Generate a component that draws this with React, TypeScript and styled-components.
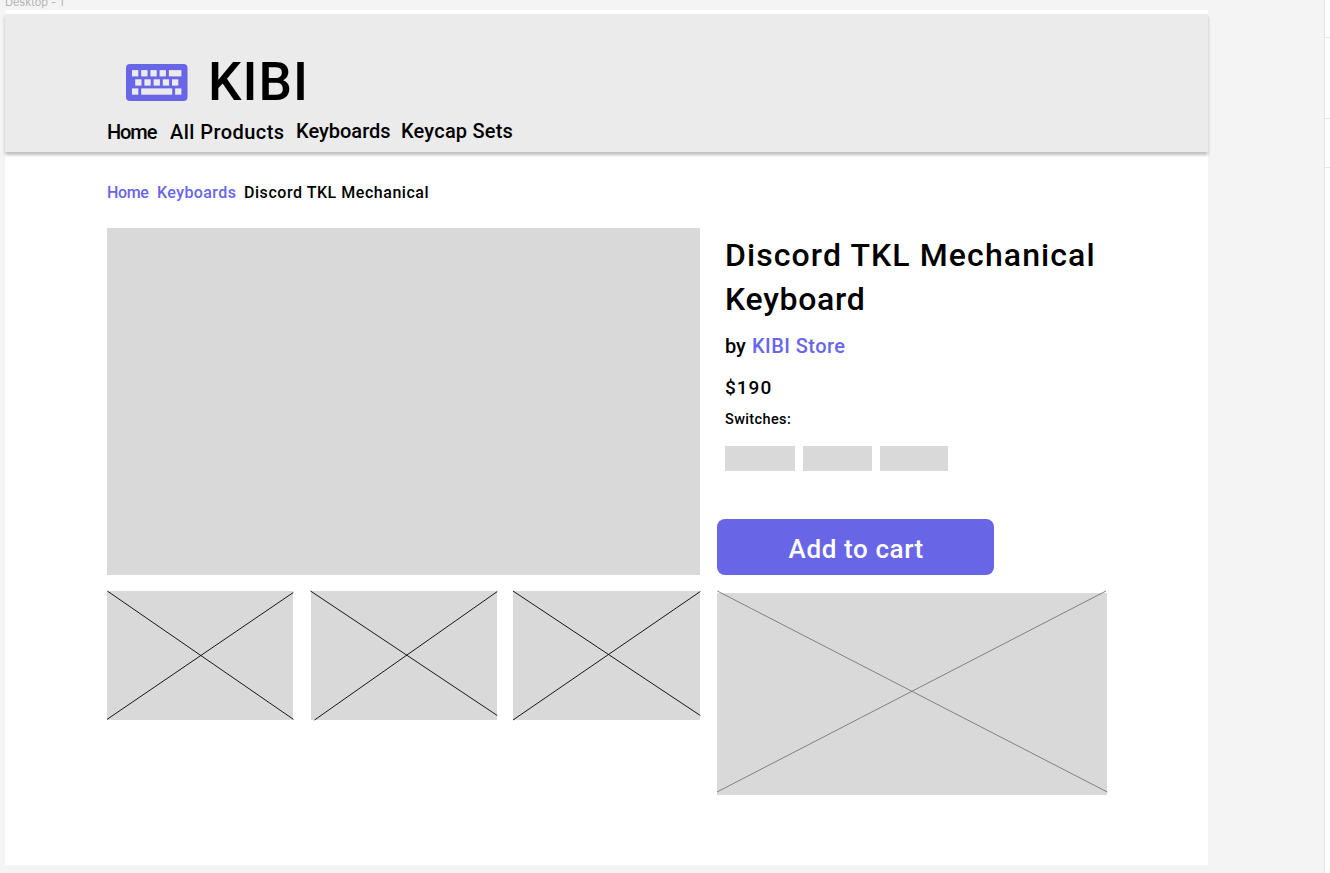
import React from "react";
import styled, { createGlobalStyle } from "styled-components";

const ACCENT = "#6866e7";
const FILL = "#d9d9d9";

const GlobalStyle = createGlobalStyle`
  * { box-sizing: border-box; }
  html, body { height: 100%; }
  body {
    margin: 0;
    overflow: hidden;
    background: #f4f4f4;
    color: #000;
    font-family: Roboto, "Liberation Sans", sans-serif;
    font-weight: 500;
  }
  h1, p { margin: 0; font-weight: 500; }
  a { color: inherit; text-decoration: none; }
`;

const Workspace = styled.div`
  display: flex;
  justify-content: space-between;
  height: 873px;
  overflow: hidden;
`;

const FrameColumn = styled.div`
  width: 1203.4px;
  margin-left: 5px;
`;

const FrameLabel = styled.div`
  display: flex;
  align-items: flex-start;
  height: 10px;
  font: 400 11px/12px Inter, sans-serif;
  color: #b5b5b5;
  white-space: nowrap;
`;

const FrameName = styled.span`
  margin-top: -4px;
`;

const Artboard = styled.main`
  height: 855.3px;
  padding-top: 4px;
  background: #fff;
`;

const Header = styled.header`
  height: 138.3px;
  padding: 38px 0 0 102px;
  background: #ebebeb;
  box-shadow: 0 3px 3px rgba(0, 0, 0, 0.25);
`;

const Brand = styled.div`
  display: flex;
  align-items: flex-start;
  height: 68px;
  padding-left: 19px;
`;

const BrandIcon = styled.svg`
  width: 61.5px;
  height: 37px;
  margin-top: 11.7px;
`;

const Text = styled.span<{ $size: number; $line: number; $spacing?: number }>`
  display: block;
  white-space: nowrap;
  font-size: ${(p) => p.$size}px;
  line-height: ${(p) => p.$line}px;
  letter-spacing: ${(p) => p.$spacing ?? 0}px;
`;

const BrandName = styled(Text)`
  margin-left: 20.5px;
`;

const Nav = styled.nav`
  display: flex;
`;

const NavItem = styled.a<{ $width: number; $raise?: boolean; $spacing: number }>`
  width: ${(p) => p.$width}px;
  margin-top: ${(p) => (p.$raise ? -1 : 0)}px;
  font-size: 20px;
  line-height: 24px;
  letter-spacing: ${(p) => p.$spacing}px;
  white-space: nowrap;
`;

const Breadcrumb = styled.nav`
  display: flex;
  height: 46px;
  margin: 30.7px 0 0 102px;
`;

const Crumb = styled.a<{ $width: number; $current?: boolean; $spacing: number }>`
  width: ${(p) => p.$width}px;
  font-size: 16px;
  line-height: 20px;
  letter-spacing: ${(p) => p.$spacing}px;
  color: ${(p) => (p.$current ? "#000" : ACCENT)};
  white-space: nowrap;
`;

const Product = styled.section`
  display: grid;
  grid-template-columns: 593.4px 390px;
  column-gap: 16.6px;
  margin: -1px 0 0 102px;
`;

const Gallery = styled.div`
  display: flex;
  flex-direction: column;
  gap: 16.7px;
`;

const HeroImage = styled.div`
  height: 346.6px;
  background: ${FILL};
`;

const Thumbnails = styled.div`
  display: grid;
  grid-template-columns: 186.4px 186.4px 187.2px;
  column-gap: 16.7px;

  & > :nth-child(2) { margin: 0 -0.6px 0 0.6px; }
`;

const Placeholder = styled.div<{ $height: number }>`
  height: ${(p) => p.$height}px;
  background: ${FILL};
`;

const Cross = styled.svg`
  display: block;
  width: 100%;
  height: 100%;
  overflow: visible;
`;

const Details = styled.div`
  display: flex;
  flex-direction: column;
`;

const Summary = styled.div`
  height: 290.8px;
  padding: 5px 0 0 8px;
`;

const Title = styled.h1`
  height: 101px;
`;

const Seller = styled.p`
  display: flex;
  height: 42px;
`;

const SellerPrefix = styled(Text)`
  width: 27px;
`;

const StoreLink = styled(Text)`
  color: ${ACCENT};
`;

const Price = styled.p`
  height: 34px;
`;

const SwitchLabel = styled.p`
  height: 36px;
`;

const SwitchOptions = styled.div`
  display: grid;
  grid-template-columns: 70.3px 69px 68.4px;
  column-gap: 7.8px;
`;

const SwitchOption = styled.div`
  height: 25px;
  background: ${FILL};
`;

const CartButton = styled.button`
  width: 277.5px;
  height: 55.8px;
  margin-bottom: 18.8px;
  padding: 5px 0 0 1px;
  border: 0;
  border-radius: 8px;
  background: ${ACCENT};
  color: #fff;
  font: 500 26px/32px Roboto, sans-serif;
  letter-spacing: 0.6px;
`;

const SidePanel = styled.aside`
  display: flex;
  flex-direction: column;
  width: 6px;
  border-left: 1px solid #e4e4e4;
  background: #fff;
`;

const PanelSection = styled.div<{ $height: number }>`
  height: ${(p) => p.$height}px;
  border-bottom: 1px solid #e4e4e4;
`;

const topKeys = [6, 15.2, 24.4, 33.6];
const middleKeys = [9.2, 18.4, 27.6, 36.8, 46];

const KeyboardIcon = () => (
  <BrandIcon viewBox="0 0 61.5 37" aria-hidden="true">
    <rect width="61.5" height="37" rx="4" fill={ACCENT} />
    <g fill="#ebebeb">
      {topKeys.map((x) => (
        <rect key={x} x={x} y="6.1" width="6.3" height="6.3" />
      ))}
      <rect x="42.9" y="6.1" width="12.5" height="6.3" />
      {middleKeys.map((x) => (
        <rect key={x} x={x} y="15.3" width="6.3" height="6.3" />
      ))}
      <rect x="6" y="24.4" width="6.3" height="6.3" />
      <rect x="15.2" y="24.4" width="31" height="6.3" />
      <rect x="49.1" y="24.4" width="6.3" height="6.3" />
    </g>
  </BrandIcon>
);

type Line = [number, number, number, number];

const CrossedBox = ({ height, lines, stroke }: { height: number; lines: Line[]; stroke: string }) => (
  <Placeholder $height={height}>
    <Cross>
      {lines.map(([x1, y1, x2, y2], i) => (
        <line key={i} x1={x1} y1={y1} x2={x2} y2={y2} stroke={stroke} strokeWidth="0.9" />
      ))}
    </Cross>
  </Placeholder>
);

const thumbnails: Line[][] = [
  [[0.3, 0, 186.5, 128.4], [0, 128.4, 186.3, 1.5]],
  [[-0.5, 0, 186.3, 124.5], [3.5, 129, 186.3, 0.5]],
  [[0, 0, 187.3, 124.5], [0, 129, 187.3, 0.5]],
];

const navItems = [
  { label: "Home", width: 63, spacing: -1.1 },
  { label: "All Products", width: 126, spacing: 0.45 },
  { label: "Keyboards", width: 105, spacing: 0, raise: true },
  { label: "Keycap Sets", width: 115, spacing: 0.2, raise: true },
];

export default function App() {
  return (
    <>
      <GlobalStyle />
      <Workspace>
        <FrameColumn>
          <FrameLabel><FrameName>Desktop - 1</FrameName></FrameLabel>
          <Artboard>
            <Header>
              <Brand>
                <KeyboardIcon />
                <BrandName $size={53} $line={60} $spacing={1}>KIBI</BrandName>
              </Brand>
              <Nav>
                {navItems.map((n) => (
                  <NavItem key={n.label} href="#" $width={n.width} $spacing={n.spacing} $raise={n.raise}>
                    {n.label}
                  </NavItem>
                ))}
              </Nav>
            </Header>
            <Breadcrumb>
              <Crumb href="#" $width={50} $spacing={-0.4}>Home</Crumb>
              <Crumb href="#" $width={87} $spacing={0.4}>Keyboards</Crumb>
              <Crumb $width={200} $spacing={0.54} $current>Discord TKL Mechanical</Crumb>
            </Breadcrumb>
            <Product>
              <Gallery>
                <HeroImage />
                <Thumbnails>
                  {thumbnails.map((lines, i) => (
                    <CrossedBox key={i} height={128.8} lines={lines} stroke="#000" />
                  ))}
                </Thumbnails>
              </Gallery>
              <Details>
                <Summary>
                  <Title>
                    <Text $size={32} $line={44} $spacing={1.1}>Discord TKL Mechanical</Text>
                    <Text $size={32} $line={44} $spacing={0.7}>Keyboard</Text>
                  </Title>
                  <Seller>
                    <SellerPrefix $size={20} $line={24}>by</SellerPrefix>
                    <StoreLink $size={20} $line={24} $spacing={0.45}>KIBI Store</StoreLink>
                  </Seller>
                  <Price><Text $size={19} $line={24} $spacing={1}>$190</Text></Price>
                  <SwitchLabel><Text $size={14.5} $line={20} $spacing={0.38}>Switches:</Text></SwitchLabel>
                  <SwitchOptions>
                    <SwitchOption />
                    <SwitchOption />
                    <SwitchOption />
                  </SwitchOptions>
                </Summary>
                <CartButton>Add to cart</CartButton>
                <CrossedBox
                  height={201.2}
                  stroke="#777"
                  lines={[[0.3, -2, 390.3, 199], [0, 199, 389, -2]]}
                />
              </Details>
            </Product>
          </Artboard>
        </FrameColumn>
        <SidePanel>
          <PanelSection $height={38} />
          <PanelSection $height={81} />
          <PanelSection $height={49} />
        </SidePanel>
      </Workspace>
    </>
  );
}
